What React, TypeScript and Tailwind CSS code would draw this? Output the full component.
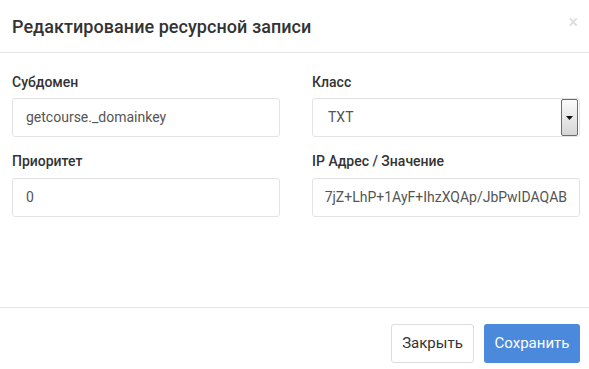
import React from "react";

const font = { fontFamily: "Roboto, 'Noto Sans', sans-serif" };

function Field({ children, className = "" }: { children: React.ReactNode; className?: string }) {
  return (
    <div className={"h-[39px] border border-[#e3e3e3] rounded-[3px] bg-white flex items-center text-[14px] text-[#555] " + className}>
      {children}
    </div>
  );
}

export default function App() {
  return (
    <div className="w-[589px] h-[369px] bg-white flex flex-col text-[#333]" style={font}>
      <div className="h-[53px] border-b border-[#e5e5e5] flex items-center justify-between pl-[12px] pr-[11px] shrink-0">
        <div className="text-[18px] font-medium text-[#333] tracking-[0.05px] pt-[1px]">Редактирование ресурсной записи</div>
        <div className="text-[18px] text-[#ddd] leading-none -mt-[8px]">×</div>
      </div>
      <div className="flex-1 grid grid-cols-[268px_268px] gap-x-[32px] pl-[12px] pt-[19px] content-start">
        <div className="flex flex-col">
          <div className="text-[14px] font-medium text-[#333] h-[26px] leading-[20px]">Субдомен</div>
          <Field className="pl-[13px] text-[14.3px]">getcourse._domainkey</Field>
          <div className="text-[14px] font-medium text-[#333] h-[41px] pt-[14px] leading-[20px]">Приоритет</div>
          <Field className="pl-[13px]">0</Field>
        </div>
        <div className="flex flex-col">
          <div className="text-[14px] font-medium text-[#333] h-[26px] leading-[20px]">Класс</div>
          <Field className="pl-[15px] pr-[1px] justify-between">
            <span>TXT</span>
            <span className="w-[17px] h-[37px] border border-[#6b6b6b] rounded-[2px] bg-gradient-to-b from-[#fbfbfb] to-[#d6d6d6] flex items-center justify-center">
              <svg width="7" height="4" viewBox="0 0 7 4"><path d="M0 0h7L3.5 4z" fill="#111" /></svg>
            </span>
          </Field>
          <div className="text-[14px] font-medium text-[#333] h-[41px] pt-[14px] leading-[20px]">IP Адрес / Значение</div>
          <Field className="justify-end overflow-hidden whitespace-nowrap pr-[12px] text-[14.6px]">
            <span>7jZ+LhP+1AyF+IhzXQAp/JbPwIDAQAB</span>
          </Field>
        </div>
      </div>
      <div className="h-[62px] border-t border-[#e5e5e5] flex items-start justify-end gap-[10px] pt-[16px] pr-[9px] shrink-0">
        <button className="h-[39px] w-[83px] border border-[#ddd] rounded-[3px] bg-white text-[15px] text-[#333]">Закрыть</button>
        <button className="h-[39px] w-[96px] rounded-[3px] bg-[#4a89dc] text-[15px] text-white">Сохранить</button>
      </div>
    </div>
  );
}
